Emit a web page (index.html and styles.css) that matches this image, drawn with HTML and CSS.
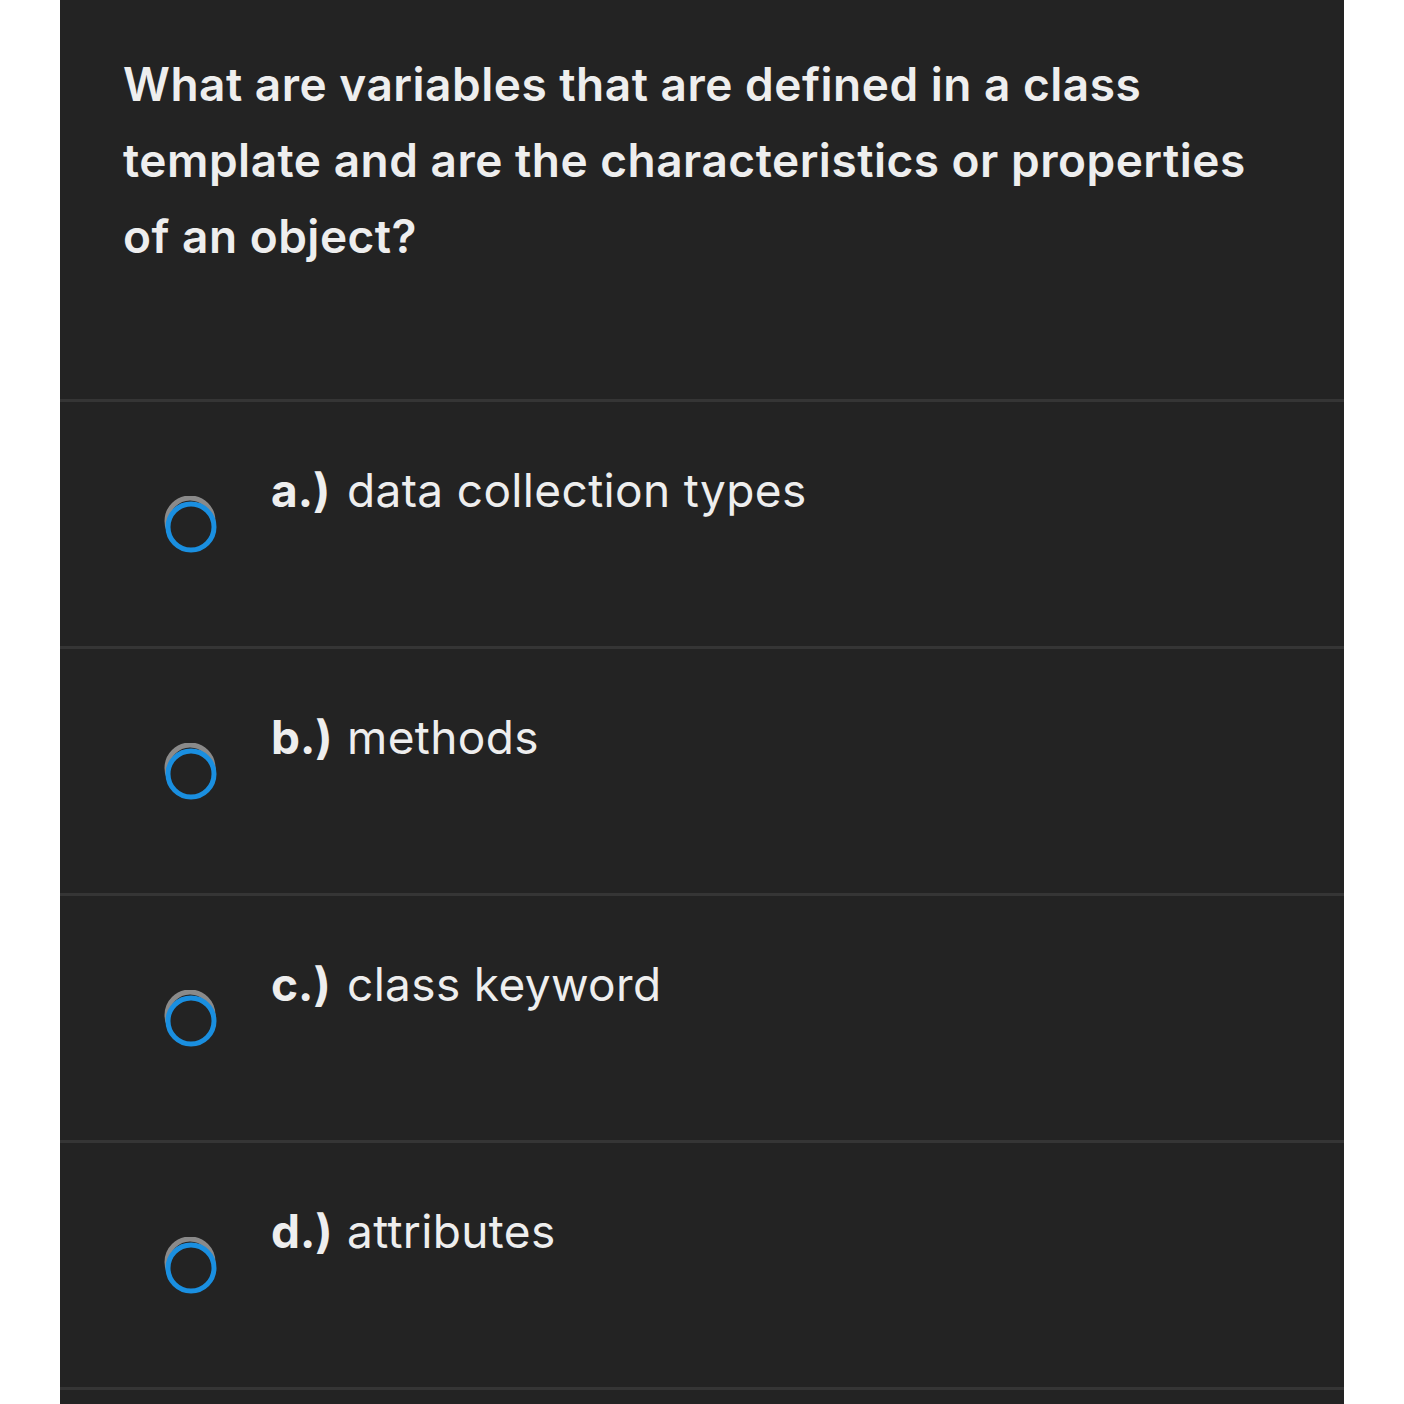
FILE: index.html
```html
<!DOCTYPE html>
<html>
<head>
<meta charset="utf-8">
<link rel="stylesheet" href="styles.css">
</head>
<body>
<div class="panel">
  <div class="question">What are variables that are defined in a class template and are the characteristics or properties of an object?</div>
  <div class="option">
    <svg class="radio" width="60" height="64" viewBox="0 0 60 64"><circle cx="29" cy="25" r="23" fill="none" stroke="#8a8a8a" stroke-width="5"/><circle cx="30" cy="31" r="23" fill="#232323" stroke="#1a8fe0" stroke-width="5"/></svg>
    <div class="label"><span class="letter">a.)</span><span class="text">data collection types</span></div>
  </div>
  <div class="option">
    <svg class="radio" width="60" height="64" viewBox="0 0 60 64"><circle cx="29" cy="25" r="23" fill="none" stroke="#8a8a8a" stroke-width="5"/><circle cx="30" cy="31" r="23" fill="#232323" stroke="#1a8fe0" stroke-width="5"/></svg>
    <div class="label"><span class="letter">b.)</span><span class="text">methods</span></div>
  </div>
  <div class="option">
    <svg class="radio" width="60" height="64" viewBox="0 0 60 64"><circle cx="29" cy="25" r="23" fill="none" stroke="#8a8a8a" stroke-width="5"/><circle cx="30" cy="31" r="23" fill="#232323" stroke="#1a8fe0" stroke-width="5"/></svg>
    <div class="label"><span class="letter">c.)</span><span class="text">class keyword</span></div>
  </div>
  <div class="option">
    <svg class="radio" width="60" height="64" viewBox="0 0 60 64"><circle cx="29" cy="25" r="23" fill="none" stroke="#8a8a8a" stroke-width="5"/><circle cx="30" cy="31" r="23" fill="#232323" stroke="#1a8fe0" stroke-width="5"/></svg>
    <div class="label"><span class="letter">d.)</span><span class="text">attributes</span></div>
  </div>
  <div class="option last"></div>
</div>
</body>
</html>
```
FILE: styles.css
```css
html, body {
  margin: 0;
  padding: 0;
  background: #ffffff;
}
.panel {
  margin-left: 60px;
  width: 1284px;
  height: 1404px;
  overflow: hidden;
  background: #232323;
  font-family: Inter, "Liberation Sans", sans-serif;
  color: #eeeeee;
}
.question {
  box-sizing: border-box;
  height: 399px;
  padding: 46px 61px 0 63px;
  font-size: 46px;
  font-weight: 600;
  letter-spacing: 0.5px;
  line-height: 76px;
}
.option {
  box-sizing: border-box;
  height: 247px;
  border-top: 3px solid #353535;
  display: flex;
  align-items: flex-start;
  padding-left: 101px;
}
.radio {
  display: block;
  margin-top: 94px;
  flex: none;
}
.label {
  margin-left: 50px;
  margin-top: 58px;
  font-size: 46px;
  letter-spacing: 0.35px;
  line-height: 60px;
  white-space: nowrap;
}
.letter {
  font-weight: 700;
  letter-spacing: 0;
  display: inline-block;
  width: 76px;
}
.text {
  font-weight: 400;
}
```
